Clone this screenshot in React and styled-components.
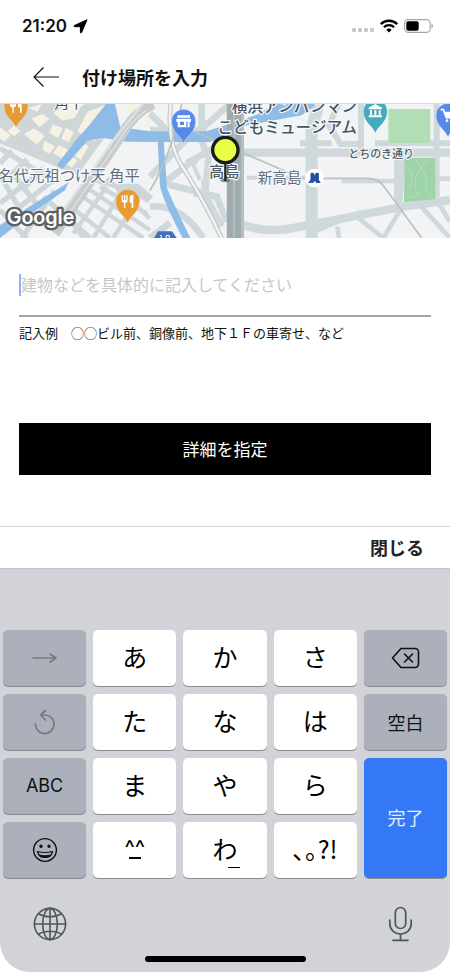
import React from "react";
import styled, { createGlobalStyle, css } from "styled-components";

const jp = '"Noto Sans CJK JP", sans-serif';
const latin = 'Inter, "Noto Sans CJK JP", sans-serif';

const GlobalStyle = createGlobalStyle`
  *, *::before, *::after { box-sizing: border-box; }
  body { margin: 0; background: #fff; color: #111; font-family: ${jp}; }
  button, input { font-family: inherit; }
`;

const Screen = styled.div`
  display: flex;
  flex-direction: column;
  min-height: 100vh;
  background: #fff;
`;

const StatusBar = styled.div`
  display: flex;
  align-items: center;
  justify-content: space-between;
  height: 52px;
  padding: 0 16px 0 22px;
`;

const StatusGroup = styled.div`
  display: flex;
  align-items: center;
  gap: 6px;
`;

const Time = styled.time`
  font: 600 17px/24px ${latin};
`;

const Header = styled.header`
  display: flex;
  align-items: center;
  gap: 22px;
  height: 52px;
  padding: 0 32px 2px;
  border-bottom: 1px solid #ddd;
`;

const IconButton = styled.button`
  display: flex;
  align-items: center;
  justify-content: center;
  padding: 0;
  border: 0;
  background: none;
  color: ${(p) => p.$color || "#111"};
`;

const Title = styled.h1`
  margin: 0;
  font-size: 18px;
  line-height: 26px;
  font-weight: 700;
`;

const MapView = styled.svg`
  display: block;
  width: 100%;
  height: 134px;
`;

const Form = styled.form`
  display: flex;
  flex-direction: column;
  flex: 1;
  padding: 28px 19px 51px;
`;

const Field = styled.div`
  display: flex;
  align-items: center;
  height: 51px;
  padding-bottom: 11px;
  border-bottom: 2px solid #a6a6a6;
`;

const Caret = styled.span`
  width: 2px;
  height: 22px;
  background: #8fb0f5;
`;

const TextInput = styled.input`
  flex: 1;
  min-width: 0;
  height: 36px;
  padding: 0 0 2px;
  border: 0;
  outline: 0;
  background: none;
  font-size: 16px;
  &::placeholder { color: #c6c6c8; opacity: 1; }
`;

const Hint = styled.p`
  margin: 6px 0 80px;
  font-size: 13px;
  line-height: 20px;
`;

const Submit = styled.button`
  height: 52px;
  padding: 0 0 2px;
  border: 0;
  background: #000;
  color: #fff;
  font-size: 17px;
`;

const Accessory = styled.div`
  display: flex;
  justify-content: flex-end;
  align-items: center;
  height: 43px;
  padding: 0 26px 2px;
  border-top: 1px solid #d4d4d6;
  border-bottom: 1px solid #c2c3c6;
`;

const CloseButton = styled.button`
  padding: 0;
  border: 0;
  background: none;
  color: #222;
  font-size: 18px;
  line-height: 26px;
  font-weight: 700;
`;

const Keyboard = styled.section`
  padding: 61px 3px 10px;
  border-radius: 0 0 30px 30px;
  background: #d1d3d9;
`;

const Keys = styled.div`
  display: grid;
  grid-template-columns: repeat(5, 1fr);
  grid-auto-rows: 56px;
  gap: 8px 7px;
`;

const tones = {
  kana: css`padding-bottom: 4px; background: #fff; color: #000; font-size: 25px;`,
  side: css`background: #abb0bb; color: #111; font-size: 18px;`,
  done: css`padding-bottom: 2px; background: #3478f6; color: #e4edff; font-size: 18px; grid-row: span 2;`,
};

const Key = styled.button`
  display: flex;
  align-items: center;
  justify-content: center;
  min-width: 0;
  padding: 0;
  border: 0;
  border-radius: 5px;
  box-shadow: 0 1px 0 #898a8d;
  line-height: 32px;
  ${(p) => tones[p.$tone]}
`;

const Latin = styled.span`
  font-family: ${latin};
`;

const Marked = styled.span`
  position: relative;
  font-family: ${(p) => (p.$center ? latin : jp)};
  font-size: ${(p) => (p.$center ? 22 : 25)}px;
  &::after {
    content: "";
    position: absolute;
    left: ${(p) => (p.$center ? "calc(50% - 6px)" : "16px")};
    bottom: ${(p) => (p.$center ? 5 : -4)}px;
    width: 12px;
    height: ${(p) => (p.$center ? 2 : 1)}px;
    background: #000;
  }
`;

const KeyboardFooter = styled.div`
  display: flex;
  align-items: center;
  justify-content: space-between;
  height: 78px;
  padding: 13px 34px 0 30px;
`;

const HomeIndicator = styled.div`
  width: 161px;
  height: 6px;
  margin: 0 auto;
  border-radius: 3px;
  background: #000;
`;

const line = { fill: "none", stroke: "currentColor", strokeLinecap: "round", strokeLinejoin: "round" };

const LocationIcon = () => (
  <svg width="15" height="15" viewBox="0 0 15 15" aria-hidden="true">
    <path d="M14 .8 8.600 13.500c-.3.7-1.200.5-1.200-.3V7.700H1.700c-.8 0-1-.9-.3-1.200Z" stroke="#000" strokeWidth="1" strokeLinejoin="round" />
  </svg>
);

const SignalIcon = () => (
  <svg width="22" height="14" viewBox="0 0 22 14" fill="#c8c8ca" aria-hidden="true">
    {[0, 6, 12, 18].map((x) => <rect key={x} x={x} y="9" width="4" height="4" rx="1.2" />)}
  </svg>
);

const WifiIcon = () => (
  <svg width="18" height="14" viewBox="0 0 18 14" fill="none" stroke="#000" strokeWidth="2.3" aria-hidden="true">
    <path d="M.8 5.1a11.7 11.7 0 0 1 16.4 0M3.9 8.3a7.3 7.3 0 0 1 10.2 0" />
    <path d="m6.3 10.7a3.9 3.9 0 0 1 5.4 0L9 13.5Z" fill="#000" stroke="none" />
  </svg>
);

const BatteryIcon = () => (
  <svg width="30" height="14" viewBox="0 0 30 14" aria-hidden="true">
    <rect x=".6" y=".6" width="25.6" height="12.8" rx="3.6" fill="none" stroke="#a5a5a7" strokeWidth="1.1" />
    <rect x="2.3" y="2.3" width="12.4" height="9.4" rx="2" />
    <path d="M27.5 4.8c2 .6 2 3.8 0 4.4Z" fill="#aaa" />
  </svg>
);

const BackIcon = () => (
  <svg width="28" height="22" viewBox="0 0 28 22" {...line} strokeWidth="1.2" strokeLinecap="butt" strokeLinejoin="miter">
    <path d="M11.5 1.5 2 11l9.5 9.5M2 11h25" />
  </svg>
);

const NextIcon = () => (
  <svg width="26" height="12" viewBox="0 0 26 12" {...line} stroke="#747881" strokeWidth="1.6">
    <path d="M1 6h23M18 2l6 4-6 4" />
  </svg>
);

const UndoIcon = () => (
  <svg width="22" height="26" viewBox="0 0 22 26" {...line} stroke="#747881" strokeWidth="1.7">
    <path d="M1.500 15.200A9.300 9.300 0 1 0 10.800 6H6.500M11.500 1.500 6.500 6l5 5" />
  </svg>
);

const DeleteIcon = () => (
  <svg width="29" height="22" viewBox="0 0 29 22" {...line} strokeWidth="1.6">
    <path d="M10 1.5h14a3.5 3.5 0 0 1 3.5 3.5v12a3.5 3.5 0 0 1-3.5 3.5H10L1.5 11Z" />
    <path d="m13.5 7 8 8m0-8-8 8" />
  </svg>
);

const SmileIcon = () => (
  <svg width="26" height="26" viewBox="0 0 26 26" {...line} strokeWidth="1.4">
    <circle cx="13" cy="13" r="11.4" />
    <circle cx="9" cy="9.2" r="1" fill="currentColor" />
    <circle cx="17" cy="9.2" r="1" fill="currentColor" />
    <path d="M5.5 14.5c4.5 1.2 10.5 1.2 15 0-.8 3.7-3.7 6-7.5 6s-6.700-2.300-7.500-6Z" strokeWidth="1.2" />
    <path d="M7.300 17.600c3.500 1 7.900 1 11.400 0-1 2-3.100 3-5.700 3S8.300 19.600 7.300 17.600Z" fill="currentColor" stroke="none" />
  </svg>
);

const GlobeIcon = () => (
  <svg width="34" height="34" viewBox="0 0 34 34" {...line} strokeWidth="1.6">
    <circle cx="17" cy="17" r="15.6" />
    <ellipse cx="17" cy="17" rx="7.3" ry="15.6" />
    <path d="M17 1.400v31.200M1.400 17h31.200M5.500 6.800c6.500 4 16.500 4 23 0M5.500 27.200c6.500-4 16.500-4 23 0" />
  </svg>
);

const MicIcon = () => (
  <svg width="25" height="36" viewBox="0 0 25 36" {...line} strokeWidth="1.7">
    <rect x="7.3" y="1.5" width="10.4" height="21" rx="5.2" />
    <path d="M1.800 14v3.500C1.800 24 6.500 28 12.500 28s10.700-4 10.700-10.500V14M12.500 28v6M5 34.300h15" />
  </svg>
);

const Pin = ({ x, y, color, children }) => (
  <g transform={`translate(${x} ${y})`}>
    <path d="M0 66C-8 42-36 34-36 0a36 36 0 0 1 72 0C36 34 8 42 0 66Z" fill={color} stroke="#fff" strokeOpacity=".45" strokeWidth="2" />
    {children}
  </g>
);

const Fork = () => (
  <path d="M-18-18v14q0 8 7 8v16h4V4q7 0 7-8v-14h-4V-4h-3v-14h-4V-4h-3v-14ZM6-10q0-10 11-10v40h-5V4H6Z" fill="#fff" />
);

const Place = styled.text`
  font-family: ${jp};
  font-size: ${(p) => p.$size}px;
  font-weight: ${(p) => (p.$strong ? 500 : 400)};
  fill: ${(p) => p.$fill || "#626e7e"};
  stroke: #f7f9fa;
  stroke-width: 7px;
  stroke-linejoin: round;
  paint-order: stroke;
`;

const Brand = styled.text`
  font: 600 59px ${latin};
  fill: #fff;
  stroke: #5d6063;
  stroke-width: 14px;
  stroke-linejoin: round;
  paint-order: stroke;
`;

const AreaMap = () => (
  <MapView viewBox="0 12 1350 402" preserveAspectRatio="xMidYMid slice" role="img" aria-label="高島周辺の地図">
    <rect y="12" width="1350" height="402" fill="#f1f3f5" />
    {/* city blocks */}
    <path d="M0 12h330l10 65-105 145L180 205 0 130Z" fill="#ced6d8" />
    <path d="M85 25 125 12 112 35ZM95 55 128 42 148 57 118 82ZM160 40 200 12 248 12 224 54 188 62ZM262 35 318 14 328 60 283 124 232 94ZM72 102 103 85 134 108 110 134ZM158 72 188 84 174 114 148 98ZM197 84 222 96 206 127 184 116ZM133 122 165 139 148 163 127 148ZM232 120 266 139 242 181 215 158ZM176 134 205 150 190 177 159 160ZM207 164 232 181 216 203 191 189ZM0 81 32 105 14 126 0 117ZM45 75 61 94 42 109 22 93Z" fill="#f5f1e3" />
    <path d="M375 12h58l-39 60ZM432 60l18-20v45ZM350 55l8 30-18 28Z" fill="#f5f1e3" />
    <g fill="none" stroke="#ced6d8" strokeWidth="16">
      <path d="M0 145 165 245M35 152 0 190M82 178 22 235M130 204 65 272M0 225l52 90M45 230l67 85M95 235 0 310M160 240 35 340M0 330l80 84M165 272 65 414M130 290l140 124" />
      <path d="M240 285 430 414M225 330 330 414M270 270 450 390M320 260 220 400M370 265 280 414M430 270 340 414M300 260 440 340M180 320 250 414M250 230l200 60M320 235l130 120" strokeWidth="13" />
      <path d="M350 265h60l40 35" strokeWidth="28" />
    </g>
    <g fill="none" stroke="#cfd8da" strokeWidth="20">
      <path d="M450 90h170M450 230 585 92M490 250l85-65M490 250l160 40 30 75M600 110l25 65-10 110 50 95M595 95 690 12M560 190l80-45M450 320q90-10 160 94M605 12v90M450 40l60 60M450 414l60-45" />
      <path d="M600 240l-20-45 35-48M580 285h30v-45" strokeWidth="12" />
      <path d="M720 158h630M730 375q75 28 170 5l320-62 130-18" strokeWidth="25" />
      <path d="M740 233h185" strokeWidth="12" />
      <path d="M955 12 935 90v324" strokeWidth="36" />
      <path d="M1083 12v145M1015 12l-28 65 35 55h70M1210 155l-12 160M1310 12v280M1125 130h230M900 130h95" strokeWidth="18" />
      <path d="M1025 243h185M1315 236h35M930 400l155-65M1012 380l5 34M1070 350l80 64M1210 315l-60 99M1250 305l100 109M1310 300l40 65" strokeWidth="14" />
      <path d="M1195 175v130" strokeWidth="26" />
    </g>
    {/* canals */}
    <g fill="#8fbce7">
      <path d="M318 12h27l16 70 89 12 170 0 150-50 58-32h122l-45 34-165 30-110 50-100 0-150-1-75-12-43 10-75 85-17-12 55-72 40-45Z" />
      <path d="M206 247 0 375v39L105 333l90-62ZM473 120h18l10 145q28 65 70 149h-23q-56-105-68-155Z" />
    </g>
    {/* railways and expressway */}
    <g fill="none">
      <path d="M460 12Q400 40 365 105L165 400" stroke="#c9cccd" strokeWidth="30" />
      <path d="M440 30Q385 70 355 125L190 365" stroke="#eceeef" strokeWidth="3" />
      <path d="M428 12 345 115 165 365" stroke="#dfe2e3" strokeWidth="7" />
      <path d="M512 12Q500 130 550 205T665 414" stroke="#bec2c3" strokeWidth="14" />
      <path d="M512 12Q500 130 550 205T665 414" stroke="#f1f2f2" strokeWidth="8" />
      <path d="M545 12q-30 150-95 260M560 85l345 150h198q32 0 50 26l112 153" stroke="#bdbfc0" strokeWidth="5" />
      <path d="M706 12v402" stroke="#b2bec1" strokeWidth="52" />
      <path d="M690 12v402M714 12v402" stroke="#9eabaf" strokeWidth="18" />
    </g>
    {/* parks */}
    <path d="M1165 27h126v102H1165Z" fill="#b2deb6" />
    <path d="M1214 173h92v124l-94 10Z" fill="#9fd3a8" />
    <path d="M1246 178q44 50 31 90l20 25M1284 180q-60 55-29 105l-33 8M1219 200q32 25 8 65" fill="none" stroke="#b5dfbb" strokeWidth="3" />
    {/* places */}
    <Place x="163" y="25" $size="44" $fill="#46505e">角平</Place>
    <Place x="695" y="37" $size="47" $strong $fill="#465363">横浜アンパンマン</Place>
    <Place x="652" y="98" $size="47" $strong $fill="#465363">こどもミュージアム</Place>
    <Place x="-5" y="242" $size="46">名代元祖つけ天 角平</Place>
    <Place x="627" y="230" $size="46" $strong $fill="#505c68">高島</Place>
    <Place x="773" y="248" $size="44">新高島</Place>
    <Place x="1045" y="174" $size="33" $strong $fill="#505c68">とちのき通り</Place>
    <Pin x={48} y={18} color="#e79b35"><Fork /></Pin>
    <Pin x={383} y={304} color="#e79b35"><Fork /></Pin>
    <Pin x={551} y={64} color="#5889e8">
      <path d="M-19-18h38v7h-38ZM-22-8h44V2h-4v16h-36V2h-4ZM-11 1v10H1V1ZM8 1v16h4V1Z" fill="#fff" fillRule="evenodd" />
    </Pin>
    <Pin x={1126} y={34} color="#45aabd">
      <path d="M0-22 20-11v5h-40v-5ZM-16-3h6v14h-6ZM-3-3h6v14h-6ZM10-3h6v14h-6ZM-20 12h40v6h-40Z" fill="#fff" />
    </Pin>
    <Pin x={1344} y={46} color="#5889e8">
      <path d="M-22-17h8l9 24h22" fill="none" stroke="#fff" strokeWidth="5" />
      <path d="M-13-11h32l-6 16H-7Z" fill="#fff" />
      <circle cx="-3" cy="16" r="4" fill="#fff" /><circle cx="13" cy="16" r="4" fill="#fff" />
    </Pin>
    <circle cx="943" cy="234" r="28" fill="#fff" />
    <path d="M926 247q7-3 7-10v-17h7l4 10 4-10h7v17q0 7 6 10h-13v-9l-4 6-4-6v9Z" fill="#204f9f" stroke="#204f9f" strokeWidth="3" />
    <path d="M462 414l12-20h42l14 20Z" fill="#3f6fbd" />
    <path d="M480 407h4v7m14 0v-7h10v7" stroke="#fff" strokeWidth="3" fill="none" />
    <ellipse cx="676" cy="241" rx="14" ry="6" fill="#666" opacity=".7" />
    <path d="M676 185v58" stroke="#222" strokeWidth="7" />
    <circle cx="676" cy="150" r="38" fill="#e8ff46" stroke="#171b1e" strokeWidth="10" />
    <Brand x="20" y="373">Google</Brand>
  </MapView>
);

const keys = [
  { label: "次の文字", tone: "side", face: <NextIcon /> },
  { face: "あ" }, { face: "か" }, { face: "さ" },
  { label: "削除", tone: "side", face: <DeleteIcon /> },
  { label: "逆順", tone: "side", face: <UndoIcon /> },
  { face: "た" }, { face: "な" }, { face: "は" },
  { tone: "side", face: "空白" },
  { tone: "side", face: <Latin>ABC</Latin> },
  { face: "ま" }, { face: "や" }, { face: "ら" },
  { tone: "done", face: "完了" },
  { label: "絵文字", tone: "side", face: <SmileIcon /> },
  { label: "顔文字", face: <Marked $center>^^</Marked> },
  { face: <Marked>わ</Marked> },
  { face: "､｡?!" },
];

export default function App() {
  return (
    <Screen>
      <GlobalStyle />
      <StatusBar>
        <StatusGroup><Time>21:20</Time><LocationIcon /></StatusGroup>
        <StatusGroup><SignalIcon /><WifiIcon /><BatteryIcon /></StatusGroup>
      </StatusBar>
      <Header>
        <IconButton type="button" aria-label="戻る"><BackIcon /></IconButton>
        <Title>付け場所を入力</Title>
      </Header>
      <AreaMap />
      <Form onSubmit={(e) => e.preventDefault()}>
        <Field>
          <Caret />
          <TextInput aria-label="付け場所" aria-describedby="place-hint" placeholder="建物などを具体的に記入してください" />
        </Field>
        <Hint id="place-hint">記入例　◯◯ビル前、銅像前、地下１Ｆの車寄せ、など</Hint>
        <Submit type="submit">詳細を指定</Submit>
      </Form>
      <Accessory><CloseButton type="button">閉じる</CloseButton></Accessory>
      <Keyboard aria-label="キーボード">
        <Keys>
          {keys.map((k, i) => (
            <Key key={i} type="button" $tone={k.tone || "kana"} aria-label={k.label}>{k.face}</Key>
          ))}
        </Keys>
        <KeyboardFooter>
          <IconButton type="button" $color="#50555c" aria-label="言語切替"><GlobeIcon /></IconButton>
          <IconButton type="button" $color="#50555c" aria-label="音声入力"><MicIcon /></IconButton>
        </KeyboardFooter>
        <HomeIndicator />
      </Keyboard>
    </Screen>
  );
}
